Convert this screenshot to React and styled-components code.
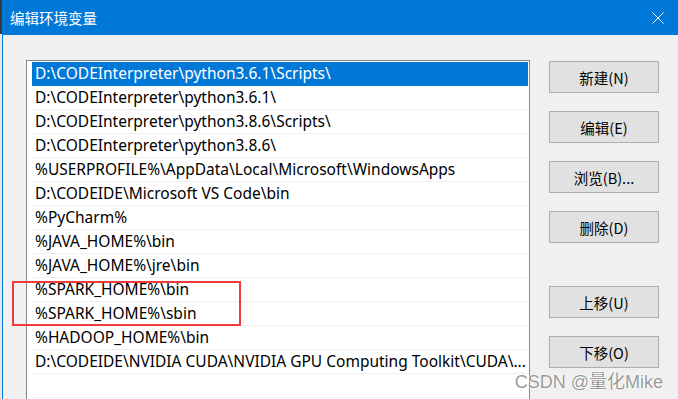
import React from 'react';
import styled, { createGlobalStyle } from 'styled-components';

const GlobalStyle = createGlobalStyle`
  *, *::before, *::after {
    box-sizing: border-box;
  }
  html, body {
    margin: 0;
    padding: 0;
    background: #f0f0f0;
    overflow: hidden;
  }
  #root {
    width: 678px;
    height: 399px;
  }
`;

const FONT = `"Segoe UI", "Noto Sans", "Noto Sans CJK SC", sans-serif`;

const paths = [
  'D:\\CODEInterpreter\\python3.6.1\\Scripts\\',
  'D:\\CODEInterpreter\\python3.6.1\\',
  'D:\\CODEInterpreter\\python3.8.6\\Scripts\\',
  'D:\\CODEInterpreter\\python3.8.6\\',
  '%USERPROFILE%\\AppData\\Local\\Microsoft\\WindowsApps',
  'D:\\CODEIDE\\Microsoft VS Code\\bin',
  '%PyCharm%',
  '%JAVA_HOME%\\bin',
  '%JAVA_HOME%\\jre\\bin',
  '%SPARK_HOME%\\bin',
  '%SPARK_HOME%\\sbin',
  '%HADOOP_HOME%\\bin',
  'D:\\CODEIDE\\NVIDIA CUDA\\NVIDIA GPU Computing Toolkit\\CUDA\\...',
  '',
];

const Screen = styled.div`
  position: relative;
  display: flex;
  width: 678px;
  height: 399px;
  overflow: hidden;
  font-family: ${FONT};
`;

const Backdrop = styled.div`
  width: 2px;
  flex: none;
  background: linear-gradient(to bottom, #3a3a3a 0, #3a3a3a 34px, #e6e6e6 34px);
`;

const Window = styled.div`
  flex: 1;
  display: flex;
  flex-direction: column;
  border-left: 1px solid #0078d7;
  background: #f0f0f0;
`;

const TitleBar = styled.div`
  height: 35px;
  flex: none;
  display: flex;
  align-items: center;
  justify-content: space-between;
  padding: 0 14px 0 7px;
  background: #0078d7;
  color: #fff;
  font-family: "Noto Sans CJK SC", sans-serif;
  font-size: 14.5px;
`;

const CloseIcon = () => (
  <svg width="12" height="12" viewBox="0 0 12 12">
    <path d="M0.5 0.5 L11.5 11.5 M11.5 0.5 L0.5 11.5" stroke="#fff" strokeWidth="1" />
  </svg>
);

const Body = styled.div`
  flex: 1;
  display: flex;
  gap: 19px;
  padding: 25px 19px 0 23px;
`;

const ListBox = styled.div`
  width: 504px;
  height: 360px;
  flex: none;
  border: 1px solid #828790;
  border-bottom: none;
  background: #fff;
  padding: 1px 1px 0 5px;
`;

const Row = styled.div`
  height: 24px;
  line-height: 23px;
  padding: 0 4px 0 3px;
  border-bottom: 1px solid #f0f0f0;
  font-size: 15.5px;
  color: ${(p) => (p.$selected ? '#fff' : '#000')};
  background: ${(p) => (p.$selected ? '#0078d7' : 'transparent')};
  border-bottom-color: ${(p) => (p.$selected ? '#0078d7' : '#f0f0f0')};
  white-space: nowrap;
  overflow: hidden;
`;

const ButtonColumn = styled.div`
  display: flex;
  flex-direction: column;
  gap: 18px;
  padding-top: 1px;
`;

const Button = styled.div`
  width: 110px;
  height: 32px;
  display: flex;
  align-items: center;
  justify-content: center;
  border: 1px solid #adadad;
  background: #e1e1e1;
  font-family: "Noto Sans CJK SC", sans-serif;
  font-size: 14.5px;
  color: #000;
  margin-top: ${(p) => (p.$gapAbove ? '25px' : '0')};
`;

const Highlight = styled.div`
  position: absolute;
  left: 12px;
  top: 281px;
  width: 229px;
  height: 45px;
  border: 2px solid #ef3b3b;
`;

const Watermark = styled.div`
  position: absolute;
  right: 15px;
  bottom: 6px;
  font-family: "Liberation Sans", "Noto Sans CJK SC", sans-serif;
  font-size: 18px;
  color: rgba(120, 120, 120, 0.75);
  text-shadow: 0 0 2px #fff, 0 0 2px #fff;
`;

export default function App() {
  return (
    <>
      <GlobalStyle />
      <Screen>
        <Backdrop />
        <Window>
          <TitleBar>
            <span>编辑环境变量</span>
            <CloseIcon />
          </TitleBar>
          <Body>
            <ListBox>
              {paths.map((p, i) => (
                <Row key={i} $selected={i === 0}>
                  {p || '\u00a0'}
                </Row>
              ))}
            </ListBox>
            <ButtonColumn>
              <Button>新建(N)</Button>
              <Button>编辑(E)</Button>
              <Button>浏览(B)...</Button>
              <Button>删除(D)</Button>
              <Button $gapAbove>上移(U)</Button>
              <Button>下移(O)</Button>
            </ButtonColumn>
          </Body>
        </Window>
        <Highlight />
        <Watermark>CSDN @量化Mike</Watermark>
      </Screen>
    </>
  );
}
